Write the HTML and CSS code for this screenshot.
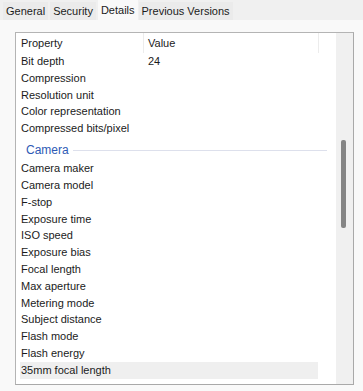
FILE: index.html
```html
<!DOCTYPE html>
<html lang="en">
<head>
    <meta charset="UTF-8">
    <title>Properties - Details</title>
    <link rel="stylesheet" href="styles.css">
</head>
<body>
    <div class="tabs">
        <div class="tab">General</div>
        <div class="tab">Security</div>
        <div class="tab active">Details</div>
        <div class="tab">Previous Versions</div>
    </div>

    <div class="panel">
        <div class="list">
            <div class="rows">
                <div class="header">
                    <div class="col-name">Property</div>
                    <div class="col-value">Value</div>
                </div>
                <div class="row"><span class="name">Bit depth</span><span class="value">24</span></div>
                <div class="row"><span class="name">Compression</span></div>
                <div class="row"><span class="name">Resolution unit</span></div>
                <div class="row"><span class="name">Color representation</span></div>
                <div class="row"><span class="name">Compressed bits/pixel</span></div>

                <div class="group">
                    <span class="group-title">Camera</span>
                    <span class="group-line"></span>
                </div>
                <div class="row"><span class="name">Camera maker</span></div>
                <div class="row"><span class="name">Camera model</span></div>
                <div class="row"><span class="name">F-stop</span></div>
                <div class="row"><span class="name">Exposure time</span></div>
                <div class="row"><span class="name">ISO speed</span></div>
                <div class="row"><span class="name">Exposure bias</span></div>
                <div class="row"><span class="name">Focal length</span></div>
                <div class="row"><span class="name">Max aperture</span></div>
                <div class="row"><span class="name">Metering mode</span></div>
                <div class="row"><span class="name">Subject distance</span></div>
                <div class="row"><span class="name">Flash mode</span></div>
                <div class="row"><span class="name">Flash energy</span></div>
                <div class="row hover"><span class="name">35mm focal length</span></div>
            </div>
            <div class="scrollbar">
                <div class="thumb"></div>
            </div>
        </div>
    </div>
</body>
</html>
```

FILE: styles.css
```css
body {
    margin: 0;
    padding: 0;
    background-color: #f0f0f0;
    font-family: "Liberation Sans", Arial, sans-serif;
    font-size: 11px;
    color: #1b1b1b;
    overflow: hidden;
}
.tabs {
    display: flex;
    align-items: flex-end;
    height: 20px;
    padding-left: 3px;
}
.tab {
    height: 18px;
    line-height: 19px;
    padding: 0 3px;
    margin-right: 2px;
    background: #ebebeb;
}
.tab.active {
    height: 20px;
    line-height: 20px;
    background: #f9f9f9;
    margin-right: 1px;
}
.panel {
    background: #f9f9f9;
    height: 371px;
    padding: 12px 0 0 15px;
    box-sizing: border-box;
}
.list {
    display: flex;
    width: 339px;
    height: 353px;
    box-sizing: border-box;
    border: 1px solid #a9a9a9;
    border-left-color: #b4b4b4;
    border-top-color: #b4b4b4;
    background: #ffffff;
}
.rows {
    flex: 1;
    overflow: hidden;
    padding-left: 4px;
}
.header {
    display: flex;
    height: 20px;
    line-height: 20px;
}
.col-name {
    width: 122px;
    padding-left: 1px;
    border-right: 1px solid #ececec;
}
.col-value {
    width: 170px;
    padding-left: 4px;
    border-right: 1px solid #ececec;
}
.row {
    display: flex;
    width: 298px;
    height: 16.8px;
    line-height: 16.8px;
}
.row.hover {
    background: #efefef;
}
.name {
    width: 127px;
    padding-left: 1px;
}
.group {
    display: flex;
    align-items: center;
    height: 23.25px;
    padding-top: 3px;
    box-sizing: border-box;
    width: 307px;
}
.group-title {
    padding-left: 6px;
    font-size: 12px;
    color: #2e5ab5;
}
.group-line {
    flex: 1;
    height: 1px;
    margin-left: 4px;
    background: #dde0ec;
}
.scrollbar {
    width: 17px;
    background: #f0f0f0;
    padding-top: 107px;
    box-sizing: border-box;
}
.thumb {
    width: 5px;
    height: 88px;
    margin-left: 5px;
    border-radius: 2px;
    background: #858585;
}
```
